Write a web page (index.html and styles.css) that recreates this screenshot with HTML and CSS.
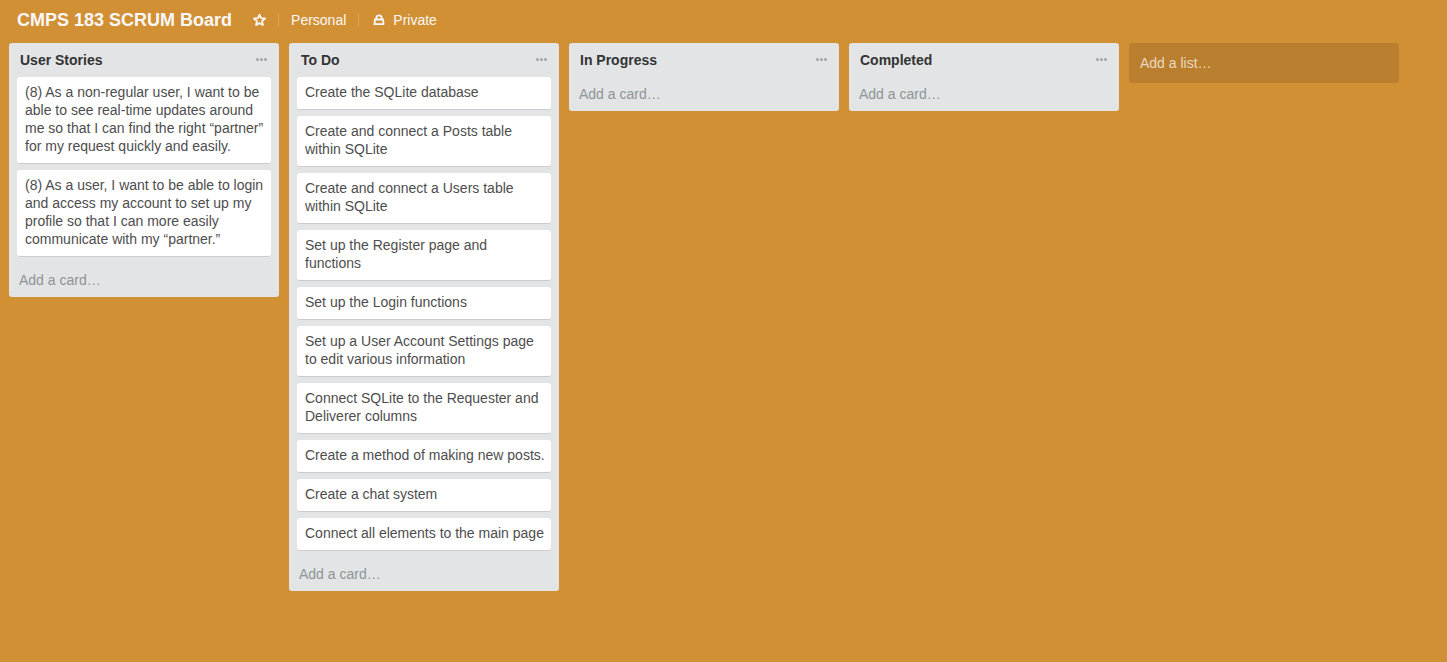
FILE: index.html
```html
<!DOCTYPE html>
<html lang="en">
<head>
<meta charset="utf-8">
<title>CMPS 183 SCRUM Board</title>
<link rel="stylesheet" href="styles.css">
</head>
<body>
<header class="board-header">
  <h1 class="board-title">CMPS 183 SCRUM Board</h1>
  <svg class="star" viewBox="0 0 14 14" width="14" height="14"><path d="M7.500 1.700 9.100 5.100l3.900.4-2.900 2.600.8 3.900-3.400-1.900L4.100 12l.8-3.900L2 5.500 5.900 5.100z" fill="none" stroke="#f8f8f8" stroke-width="1.800" stroke-linejoin="round"/></svg>
  <span class="divider"></span>
  <span class="org">Personal</span>
  <span class="divider"></span>
  <svg class="lock" viewBox="0 0 12 12" width="12" height="12"><path d="M3.200 5.500V4.300a2.800 2.900 0 0 1 5.600 0v1.200M1.900 5.500h8.200l.4 4.700H1.500z" fill="none" stroke="#f8f8f8" stroke-width="1.800" stroke-linejoin="round"/></svg>
  <span class="privacy">Private</span>
</header>
<main class="lists">
  <section class="list">
    <div class="list-header"><h2>User Stories</h2><span class="dots"><i></i><i></i><i></i></span></div>
    <div class="cards">
      <article class="card">(8) As a non-regular user, I want to be able to see real-time updates around me so that I can find the right “partner” for my request quickly and easily.</article>
      <article class="card">(8) As a user, I want to be able to login and access my account to set up my profile so that I can more easily communicate with my “partner.”</article>
    </div>
    <div class="add-card">Add a card…</div>
  </section>
  <section class="list">
    <div class="list-header nudge"><h2>To Do</h2><span class="dots"><i></i><i></i><i></i></span></div>
    <div class="cards">
      <article class="card">Create the SQLite database</article>
      <article class="card">Create and connect a Posts table within SQLite</article>
      <article class="card">Create and connect a Users table within SQLite</article>
      <article class="card">Set up the Register page and functions</article>
      <article class="card">Set up the Login functions</article>
      <article class="card">Set up a User Account Settings page to edit various information</article>
      <article class="card">Connect SQLite to the Requester and Deliverer columns</article>
      <article class="card">Create a method of making new posts.</article>
      <article class="card">Create a chat system</article>
      <article class="card">Connect all elements to the main page</article>
    </div>
    <div class="add-card">Add a card…</div>
  </section>
  <section class="list">
    <div class="list-header"><h2>In Progress</h2><span class="dots"><i></i><i></i><i></i></span></div>
    <div class="cards"></div>
    <div class="add-card">Add a card…</div>
  </section>
  <section class="list">
    <div class="list-header"><h2>Completed</h2><span class="dots"><i></i><i></i><i></i></span></div>
    <div class="cards"></div>
    <div class="add-card">Add a card…</div>
  </section>
  <div class="add-list">Add a list…</div>
</main>
</body>
</html>
```
FILE: styles.css
```css
* { box-sizing: border-box; }
body {
  margin: 0;
  height: 662px;
  overflow: hidden;
  background: #d29034;
  color: #4d4d4d;
  font: 14px/18px "Liberation Sans", Arial, sans-serif;
}
.board-header {
  display: flex;
  align-items: center;
  height: 43px;
  padding: 0 0 3px 17px;
  color: #f8f8f8;
}
.board-title { margin: 0; font-size: 18px; line-height: 24px; white-space: nowrap; }
.star { margin-left: 20px; margin-right: 12px; }
.divider { width: 1px; height: 14px; background: #dba65d; }
.org { margin: 0 12px; }
.lock { margin-left: 14px; margin-right: 8px; }
.lists { display: flex; align-items: flex-start; gap: 10px; padding-left: 9px; }
.list {
  flex: 0 0 270px;
  padding-bottom: 1px;
  border-radius: 3px;
  background: #e2e4e6;
}
.list-header {
  display: flex;
  justify-content: space-between;
  height: 34px;
  padding: 8px 12px 0 11px;
}
.nudge { padding-left: 12px; }
.list-header h2 { margin: 0; font-size: 14px; line-height: 18px; color: #333; }
.dots { display: flex; gap: 1px; margin-top: 7px; }
.dots i { width: 3px; height: 3px; border-radius: 50%; background: #a3a3a3; }
.cards { padding: 0 8px; }
.card {
  margin-bottom: 6px;
  padding: 6px 6px 8px 8px;
  border-radius: 3px;
  border-bottom: 1px solid #ccc;
  background: #fff;
}
.add-card { height: 33px; padding: 8px 10px; color: #8c9496; }
.add-list {
  flex: 0 0 270px;
  height: 40px;
  padding: 11px;
  border-radius: 3px;
  background: #b97f2e;
  color: #ead9c0;
}
```
